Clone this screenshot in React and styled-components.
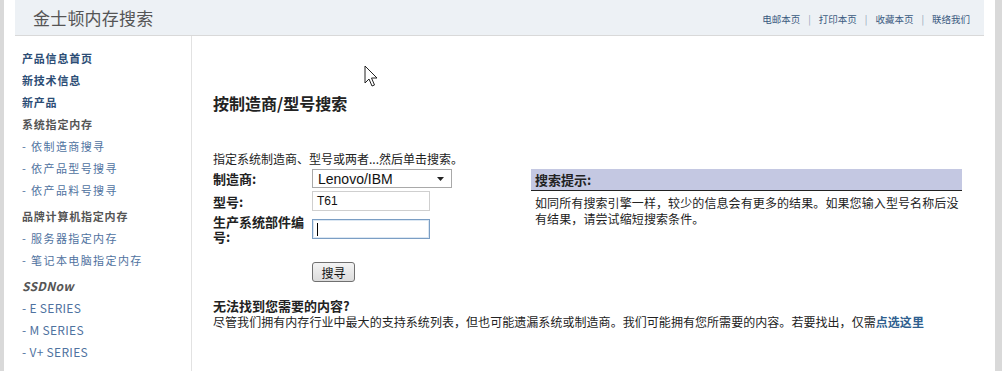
import React from "react";
import styled, { createGlobalStyle } from "styled-components";

const GlobalStyle = createGlobalStyle`
  html, body {
    margin: 0;
    padding: 0;
    background: #d9d9d9;
  }
  body {
    font-family: "Liberation Sans", "Noto Sans CJK SC", sans-serif;
    color: #222;
  }
`;

const cjk = `"Noto Sans CJK SC", "Liberation Sans", sans-serif`;

const Page = styled.div`
  margin-left: 4px;
  width: 991px;
  min-height: 371px;
  background: #fff;
  padding: 0 11px;
  box-sizing: border-box;
  position: relative;
`;

const Header = styled.header`
  height: 35px;
  background: #edf1f5;
  border-bottom: 1px solid #d9d9d9;
  display: flex;
  align-items: center;
  justify-content: space-between;
  padding: 0 14px 0 18px;
`;

const SiteTitle = styled.h1`
  margin: 0;
  font-family: ${cjk};
  font-size: 17px;
  font-weight: 400;
  color: #555;
  letter-spacing: 0.2px;
`;

const TopLinks = styled.nav`
  display: flex;
  align-items: center;
  gap: 8px;
  font-family: ${cjk};
  font-size: 9.5px;
  color: #3a5a80;
  margin-top: 2px;
`;

const Sep = styled.span`
  color: #8fa2b8;
`;

const Body = styled.div`
  display: flex;
`;

const Sidebar = styled.aside`
  width: 177px;
  flex: none;
  border-right: 1px solid #e2e2e2;
  padding: 11px 0 0 7px;
  box-sizing: border-box;
  min-height: 335px;
`;

const NavItem = styled.div`
  height: 22px;
  line-height: 22px;
  font-family: ${cjk};
  font-size: ${(p) => (p.$latin ? "12px" : "11px")};
  letter-spacing: ${(p) => (p.$latin ? "0.3px" : p.$sub ? "1.4px" : "0.8px")};
  font-weight: ${(p) => (p.$sub ? 400 : 700)};
  font-style: ${(p) => (p.$italic ? "italic" : "normal")};
  color: ${(p) => (p.$group ? "#555" : p.$sub ? "#4f72a0" : "#2c4d75")};
  margin-top: ${(p) => (p.$gap ? "4px" : "0")};
  white-space: nowrap;
`;

const Main = styled.main`
  flex: 1;
  padding: 57px 0 0 21px;
  position: relative;
`;

const Title = styled.h2`
  margin: 0;
  font-family: ${cjk};
  font-size: 16px;
  line-height: 20px;
  font-weight: 700;
  color: #222;
`;

const Row = styled.div`
  display: flex;
  margin-top: 38px;
`;

const FormCol = styled.div`
  width: 318px;
  flex: none;
`;

const Intro = styled.p`
  margin: 0;
  font-family: ${cjk};
  font-size: 12px;
  line-height: 16px;
  color: #222;
`;

const FormGrid = styled.div`
  display: grid;
  grid-template-columns: 99px auto;
  align-items: center;
  row-gap: 3px;
  margin-top: 2px;
`;

const Label = styled.label`
  font-family: ${cjk};
  font-size: 13px;
  line-height: 15px;
  font-weight: 700;
  color: #222;
`;

const SelectBox = styled.div`
  width: 140px;
  height: 19px;
  box-sizing: border-box;
  border: 1px solid #a9a9a9;
  background: #fff;
  display: flex;
  align-items: center;
  justify-content: space-between;
  padding: 0 7px 0 5px;
  font-family: "Liberation Sans", sans-serif;
  font-size: 14px;
  color: #111;
`;

const TextBox = styled.div`
  width: 118px;
  height: 20px;
  box-sizing: border-box;
  border: 1px solid ${(p) => (p.$focus ? "#7b9ec4" : "#cfcfcf")};
  box-shadow: ${(p) => (p.$focus ? "inset 0 0 0 1px #dbe7f3" : "none")};
  background: #fff;
  display: flex;
  align-items: center;
  padding-left: 4px;
  font-family: "Liberation Sans", sans-serif;
  font-size: 12px;
  color: #111;
`;

const Caret = styled.span`
  width: 1px;
  height: 13px;
  background: #000;
`;

const Button = styled.button`
  grid-column: 2;
  justify-self: start;
  margin-top: 15px;
  width: 43px;
  height: 20px;
  padding: 0;
  border: 1px solid #707070;
  border-radius: 3px;
  background: linear-gradient(#f4f4f4, #dcdcdc);
  font-family: ${cjk};
  font-size: 12px;
  color: #111;
`;

const HintBox = styled.section`
  width: 431px;
  margin-top: 18px;
  align-self: flex-start;
`;

const HintHead = styled.div`
  height: 21px;
  line-height: 21px;
  background: #c4c8e2;
  border-bottom: 1px solid #222;
  padding-left: 4px;
  font-family: ${cjk};
  font-size: 13px;
  font-weight: 700;
  color: #222;
`;

const HintText = styled.p`
  margin: 0;
  padding: 4px 2px 0 4px;
  font-family: ${cjk};
  font-size: 12px;
  line-height: 16px;
  letter-spacing: 0.1px;
  color: #222;
`;

const Bottom = styled.section`
  margin-top: 16px;
`;

const BottomHead = styled.div`
  font-family: ${cjk};
  font-size: 13px;
  line-height: 16px;
  font-weight: 700;
  color: #222;
`;

const BottomText = styled.p`
  margin: 0;
  font-family: ${cjk};
  font-size: 12px;
  line-height: 16px;
  letter-spacing: 0.05px;
  color: #222;
  white-space: nowrap;
`;

const Link = styled.a`
  color: #2f5f8f;
  font-weight: 700;
  text-decoration: none;
`;

const Cursor = styled.svg`
  position: absolute;
  left: 172px;
  top: 29px;
`;

const topLinks = ["电邮本页", "打印本页", "收藏本页", "联络我们"];

const nav = [
  { t: "产品信息首页" },
  { t: "新技术信息" },
  { t: "新产品" },
  { t: "系统指定内存", group: true },
  { t: "- 依制造商搜寻", sub: true },
  { t: "- 依产品型号搜寻", sub: true },
  { t: "- 依产品料号搜寻", sub: true },
  { t: "品牌计算机指定内存", group: true, gap: true },
  { t: "- 服务器指定内存", sub: true },
  { t: "- 笔记本电脑指定内存", sub: true },
  { t: "SSDNow", group: true, italic: true, latin: true, gap: true },
  { t: "- E SERIES", sub: true, latin: true },
  { t: "- M SERIES", sub: true, latin: true },
  { t: "- V+ SERIES", sub: true, latin: true },
];

export default function App() {
  return (
    <>
      <GlobalStyle />
      <Page>
        <Header>
          <SiteTitle>金士顿内存搜索</SiteTitle>
          <TopLinks>
            {topLinks.map((l, i) => (
              <React.Fragment key={l}>
                {i > 0 && <Sep>|</Sep>}
                <span>{l}</span>
              </React.Fragment>
            ))}
          </TopLinks>
        </Header>
        <Body>
          <Sidebar>
            {nav.map((n) => (
              <NavItem
                key={n.t}
                $group={n.group}
                $sub={n.sub}
                $italic={n.italic}
                $latin={n.latin}
                $gap={n.gap}
              >
                {n.t}
              </NavItem>
            ))}
          </Sidebar>
          <Main>
            <Cursor width="14" height="24" viewBox="0 0 14 24">
              <path
                d="M1 1 L1 18 L5 14 L8 21 L10.5 20 L7.5 13 L13 13 Z"
                fill="#fff"
                stroke="#222"
                strokeWidth="1"
                strokeLinejoin="round"
              />
            </Cursor>
            <Title>按制造商/型号搜索</Title>
            <Row>
              <FormCol>
                <Intro>指定系统制造商、型号或两者...然后单击搜索。</Intro>
                <FormGrid>
                  <Label>制造商:</Label>
                  <SelectBox>
                    <span>Lenovo/IBM</span>
                    <svg width="7" height="4" viewBox="0 0 7 4">
                      <path d="M0 0 H7 L3.5 4 Z" fill="#222" />
                    </svg>
                  </SelectBox>
                  <Label>型号:</Label>
                  <TextBox>T61</TextBox>
                  <Label>生产系统部件编号:</Label>
                  <TextBox $focus>
                    <Caret />
                  </TextBox>
                  <Button>搜寻</Button>
                </FormGrid>
              </FormCol>
              <HintBox>
                <HintHead>搜索提示:</HintHead>
                <HintText>
                  如同所有搜索引擎一样，较少的信息会有更多的结果。如果您输入型号名称后没有结果，请尝试缩短搜索条件。
                </HintText>
              </HintBox>
            </Row>
            <Bottom>
              <BottomHead>无法找到您需要的内容?</BottomHead>
              <BottomText>
                尽管我们拥有内存行业中最大的支持系统列表，但也可能遗漏系统或制造商。我们可能拥有您所需要的内容。若要找出，仅需
                <Link href="#">点选这里</Link>
              </BottomText>
            </Bottom>
          </Main>
        </Body>
      </Page>
    </>
  );
}
